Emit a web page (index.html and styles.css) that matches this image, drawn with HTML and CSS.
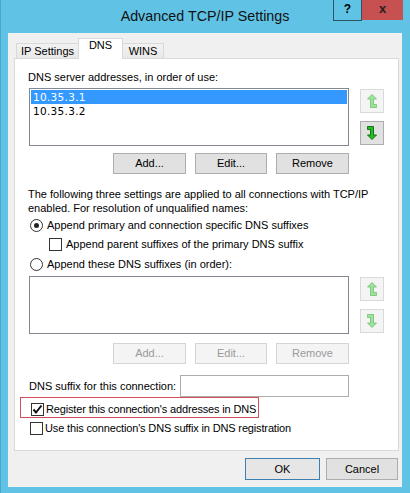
FILE: index.html
```html
<!DOCTYPE html>
<html lang="en">
<head>
  <meta charset="utf-8" />
  <title>Advanced TCP/IP Settings</title>
  <link rel="stylesheet" href="styles.css">
</head>

<body>
  <div class="window">
    <div class="titlebar">
      <span class="title">Advanced TCP/IP Settings</span>
      <div class="caption-buttons">
        <span class="btn-help">?</span>
        <span class="btn-close">x</span>
      </div>
    </div>

    <div class="client">
      <div class="tabs">
        <span class="tab tab-ip">IP Settings</span>
        <span class="tab tab-dns active">DNS</span>
        <span class="tab tab-wins">WINS</span>
      </div>

      <div class="panel">
        <div class="label first-label">DNS server addresses, in order of use:</div>
        <div class="list-row">
          <div class="listbox">
            <div class="list-item selected">10.35.3.1</div>
            <div class="list-item">10.35.3.2</div>
          </div>
          <div class="arrow-col">
            <span class="arrow-btn disabled">
              <svg viewBox="0 0 10 14" width="10" height="14"><path class="arrow-faded" d="M5 0.5 L9.5 5 L6.5 5 L6.5 10.5 L9.5 10.5 L9.5 13.5 L3.5 13.5 L3.5 5 L0.5 5 Z"/></svg>
            </span>
            <span class="arrow-btn">
              <svg viewBox="0 0 10 14" width="10" height="14"><path class="arrow-live" d="M5 13.5 L0.5 9 L3.5 9 L3.5 3.5 L0.5 3.5 L0.5 0.5 L6.5 0.5 L6.5 9 L9.5 9 Z"/></svg>
            </span>
          </div>
        </div>
        <div class="button-row">
          <span class="btn w73">Add...</span>
          <span class="btn w72">Edit...</span>
          <span class="btn w73">Remove</span>
        </div>

        <p class="note">The following three settings are applied to all connections with TCP/IP enabled. For resolution of unqualified names:</p>

        <div class="option first-option">
          <span class="radio checked"></span>
          <span>Append primary and connection specific DNS suffixes</span>
        </div>
        <div class="option sub-option">
          <span class="checkbox"></span>
          <span>Append parent suffixes of the primary DNS suffix</span>
        </div>
        <div class="option last-option">
          <span class="radio"></span>
          <span>Append these DNS suffixes (in order):</span>
        </div>

        <div class="list-row second-list">
          <div class="listbox"></div>
          <div class="arrow-col">
            <span class="arrow-btn disabled">
              <svg viewBox="0 0 10 14" width="10" height="14"><path class="arrow-faded" d="M5 0.5 L9.5 5 L6.5 5 L6.5 10.5 L9.5 10.5 L9.5 13.5 L3.5 13.5 L3.5 5 L0.5 5 Z"/></svg>
            </span>
            <span class="arrow-btn disabled">
              <svg viewBox="0 0 10 14" width="10" height="14"><path class="arrow-faded" d="M5 13.5 L0.5 9 L3.5 9 L3.5 3.5 L0.5 3.5 L0.5 0.5 L6.5 0.5 L6.5 9 L9.5 9 Z"/></svg>
            </span>
          </div>
        </div>
        <div class="button-row second-buttons">
          <span class="btn disabled w73">Add...</span>
          <span class="btn disabled w72">Edit...</span>
          <span class="btn disabled w73">Remove</span>
        </div>

        <div class="suffix-row">
          <span>DNS suffix for this connection:</span>
          <span class="textbox"></span>
        </div>

        <div class="highlight">
          <span class="checkbox checked">
            <svg viewBox="0 0 11 11" width="11" height="11"><path d="M1.5 5.5 L4 8.5 L9.5 1.5" /></svg>
          </span>
          <span class="nowrap">Register this connection's addresses in DNS</span>
        </div>
        <div class="option register-suffix">
          <span class="checkbox"></span>
          <span>Use this connection's DNS suffix in DNS registration</span>
        </div>
      </div>

      <div class="dialog-buttons">
        <span class="btn default w75">OK</span>
        <span class="btn w72">Cancel</span>
      </div>
    </div>
  </div>
</body>
</html>
```

FILE: styles.css
```css
html, body {
  margin: 0;
  padding: 0;
  width: 410px;
  height: 493px;
  overflow: hidden;
  background: #60c3e6;
  font-family: 'Liberation Sans', Arial, sans-serif;
  font-size: 11px;
  color: #000;
}

.window {
  width: 410px;
  height: 493px;
  box-sizing: border-box;
  border-left: 1px solid #4aa9cd;
  display: flex;
  flex-direction: column;
}

/* Title bar */
.titlebar {
  height: 33px;
  display: grid;
  grid-template-columns: 76px 1fr 77px;
  align-items: start;
}

.title {
  grid-column: 2;
  text-align: center;
  font-size: 14.3px;
  line-height: 18px;
  padding-top: 7px;
  color: #111;
}

.caption-buttons {
  grid-column: 3;
  justify-self: end;
  margin-right: 7px;
  display: flex;
}

.btn-help {
  width: 29px;
  height: 21px;
  box-sizing: border-box;
  border: 1px solid #2c5566;
  border-top: none;
  text-align: center;
  font-weight: bold;
  font-size: 12px;
  line-height: 19px;
}

.btn-close {
  width: 41px;
  height: 20px;
  background: #c75050;
  text-align: center;
  font-weight: bold;
  font-size: 13px;
  line-height: 18px;
  color: #222;
}

/* Client area */
.client {
  margin-left: 7px;
  width: 394px;
  height: 454px;
  background: #f0f0f0;
  display: flex;
  flex-direction: column;
}

.tabs {
  display: flex;
  align-items: flex-end;
  margin-top: 5px;
  padding-left: 8px;
  height: 20px;
}

.tab {
  box-sizing: border-box;
  height: 15px;
  border: 1px solid #d9d9d9;
  border-bottom: none;
  background: linear-gradient(#f2f2f2, #e8e8e8);
  text-align: center;
  line-height: 14px;
}

.tab-ip { width: 63px; }
.tab-wins { width: 41px; border-left: none; }

.tab.active {
  position: relative;
  z-index: 1;
  width: 45px;
  height: 21px;
  margin: 0 0 -1px -1px;
  background: #fff;
  line-height: 12px;
}

.panel {
  margin-left: 6px;
  width: 385px;
  height: 393px;
  box-sizing: border-box;
  border: 1px solid #d9d9d9;
  background: #fff;
  padding-left: 14px;
}

.label { line-height: 14px; }
.first-label { margin-top: 11px; margin-left: -1px; }
.nowrap { white-space: nowrap; }

.list-row {
  display: flex;
  margin-top: 4px;
}

.listbox {
  width: 320px;
  height: 58px;
  box-sizing: border-box;
  border: 1px solid #828790;
  background: #fff;
  padding: 1px;
}

.list-item {
  height: 14px;
  line-height: 14px;
  padding-left: 2px;
  font-family: 'DejaVu Sans', sans-serif;
  font-size: 10.5px;
  letter-spacing: 0.3px;
}

.list-item.selected {
  background: #3399ff;
  color: #fff;
}

.arrow-col {
  display: flex;
  flex-direction: column;
  gap: 8px;
  margin: 1px 0 0 11px;
}

.arrow-btn {
  width: 24px;
  height: 24px;
  box-sizing: border-box;
  border: 1px solid #adadad;
  background: #e1e1e1;
  display: flex;
  align-items: center;
  justify-content: center;
}

.arrow-btn.disabled {
  border-color: #dadada;
  background: #f4f4f4;
}

.arrow-faded { fill: #9ee09e; stroke: #6cc46c; stroke-width: 0.8; }
.arrow-live { fill: #22c022; stroke: #0c6a0c; stroke-width: 0.9; }

.button-row {
  width: 320px;
  display: flex;
  justify-content: flex-end;
  gap: 9px;
  margin-top: 7px;
}

.btn {
  box-sizing: border-box;
  height: 21px;
  border: 1px solid #adadad;
  background: #e1e1e1;
  text-align: center;
  line-height: 19px;
}

.btn.disabled {
  border-color: #d5d5d5;
  background: #f4f4f4;
  color: #9a9a9a;
}

.w72 { width: 72px; }
.w73 { width: 73px; }
.w75 { width: 75px; }

.note {
  margin: 13px 0 0 -1px;
  width: 345px;
  line-height: 14px;
}

.option {
  display: flex;
  align-items: center;
  gap: 4px;
  height: 14px;
  margin-left: 1px;
}

.first-option { margin-top: 3px; }
.sub-option { margin: 5px 0 0 20px; }
.last-option { margin-top: 6px; }

.radio {
  width: 13px;
  height: 13px;
  box-sizing: border-box;
  border: 1px solid #333;
  border-radius: 50%;
  background: #fff;
  display: flex;
  align-items: center;
  justify-content: center;
}

.radio.checked::after {
  content: "";
  width: 5px;
  height: 5px;
  border-radius: 50%;
  background: #222;
}

.checkbox {
  width: 13px;
  height: 13px;
  flex: none;
  box-sizing: border-box;
  border: 1px solid #333;
  background: #fff;
  display: flex;
  align-items: center;
  justify-content: center;
}

.checkbox svg path {
  fill: none;
  stroke: #111;
  stroke-width: 2;
}

.second-list { margin-top: 5px; }
.second-buttons { margin-top: 9px; }

.suffix-row {
  display: flex;
  align-items: center;
  justify-content: space-between;
  width: 320px;
  margin-top: 11px;
}

.textbox {
  width: 169px;
  height: 22px;
  box-sizing: border-box;
  border: 1px solid #adadad;
  background: #fff;
}

.highlight {
  display: flex;
  align-items: center;
  gap: 2px;
  width: 239px;
  height: 21px;
  box-sizing: border-box;
  margin-left: -9px;
  padding: 3px 0 0 10px;
  border: 1px solid #cf4f5a;
  letter-spacing: -0.15px;
}

.register-suffix { margin-top: 3px; gap: 2px; letter-spacing: -0.15px; }

.dialog-buttons {
  display: flex;
  justify-content: flex-end;
  gap: 6px;
  margin: 7px 4px 0 0;
}

.btn.default {
  border-color: #3c7fb1;
  background: #e6e6e6;
}

.dialog-buttons .btn { height: 22px; line-height: 20px; }
```
